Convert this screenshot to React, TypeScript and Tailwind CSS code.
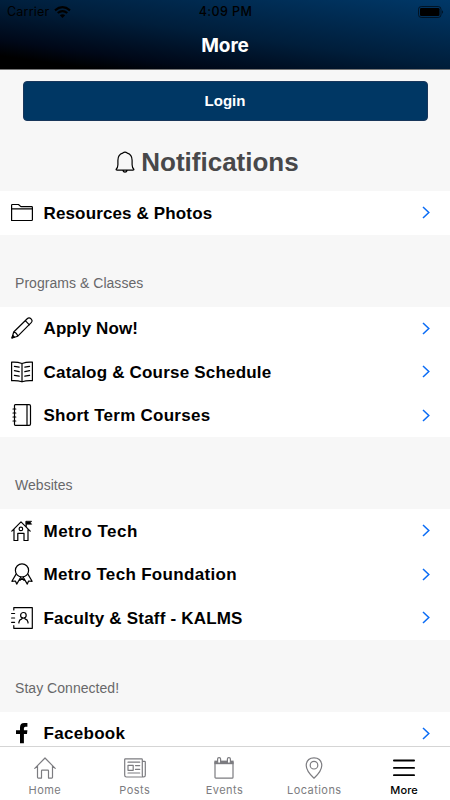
import React from 'react';

const Svg = ({ children, className = '' }: { children: React.ReactNode; className?: string }) => (
  <svg viewBox="0 0 22 22" width="22" height="22" stroke="currentColor" strokeWidth="1.2" fill="none" strokeLinecap="round" strokeLinejoin="round" className={`shrink-0 ${className}`}>{children}</svg>
);

const Icons = {
  Folder: () => <Svg><path d="M.6 18.5V3.2q0-.7.7-.7h6.2l2.4 2.1h10.7q.8 0 .8.8v12.4q0 .7-.8.7zM.6 6.9h20.8" /></Svg>,
  Pencil: () => <Svg><path d="M1 21 2.7 15 16.2 1.8q1.8-1.8 3.8 0 2 2 .2 3.9L6.8 19.2zM2.7 15q3.3.8 4.1 4.2M14.3 3.7l4.1 4.1" /><path d="m1 21 .8-2.5 1.7 1.7z" fill="currentColor" /></Svg>,
  Book: () => <Svg><path d="M.6 1.2Q6 .7 11 2.5q5-1.8 10.4-1.3v18.5q-5.4-.5-10.4 1.1-5-1.6-10.4-1.1zM11 2.5v18.3M3.4 5.3l4.8.9M3.4 9.7l4.8.9M3.4 14.3l4.8.8M18.6 5.3l-4.8.9M18.6 9.7l-4.8.9M18.6 14.3l-4.8.8" /></Svg>,
  Notebook: () => <Svg><path d="M3.5 1.5q0-.8.8-.8h13.8q1.4 0 1.4 1.4v17.8q0 1.4-1.4 1.4H4.3q-.8 0-.8-.8zM16 1v20M2 5h2.8M2 9h2.8M2 13h2.8M2 17h2.8" /></Svg>,
  School: () => <Svg><path d="M.8 11.1 10 1.9l9.2 9.2M3 9v11.5h3.8v-7.2H13v7.2h4V9M15.2 7V1.5" /><circle cx="9.9" cy="8.9" r="1.8" /><path d="M15.3 1.2h5.4l-1.3 1.6 1.3 1.5h-5.4z" fill="currentColor" strokeWidth=".6" /></Svg>,
  Ribbon: () => <Svg><circle cx="11" cy="7.4" r="6.6" /><path d="m5.1 11.1-4.2 7.2 3.5-.3 1.3 3.1 4.2-7.1M16.9 11.1l4.2 7.2-3.5-.3-1.3 3.1-4.2-7.1M9 17.4l2-2.1 2 2.1" /></Svg>,
  Contacts: () => <Svg><path d="M2.8 3V.7h18.5v20.6H2.8v-2.6M.6 6.5h3M.6 11h3M.6 15.3h3" /><circle cx="12.4" cy="8.3" r="2.8" /><path d="M7.9 16v-.8q.4-2.6 3-3.3l.4-1M17 16v-.8q-.4-2.6-3-3.3l-.4-1" /></Svg>,
  Facebook: () => <Svg><path d="M9 21.2V12H5V8.2h4V5.4Q9 1 13.2 1h3.2v3.8h-2q-1.5 0-1.5 1.5v1.9h3.5L16 12h-3.1v9.2z" fill="currentColor" stroke="none" /></Svg>,
  Bell: () => <Svg className="text-black"><path d="M3.1 19.2q-1.2 0-.9-1 1.6-1.5 1.7-4.5V9.2Q4 3.4 8.7 2.1 11 .1 13.3 2.1 18 3.4 18.1 9.2v4.5q.1 3 1.7 4.5.3 1-.9 1zM8.8 19.3q.6 1.9 2.2 1.9t2.2-1.9" /></Svg>,
};

const TabIcons = {
  Home: () => <Svg><path d="M.8 11.4 11 1l10.2 10.4M3.5 9v11.3q0 .8.8.8h3.2v-7.2q0-.7.7-.7h5.6q.7 0 .7.7v7.2h3.2q.8 0 .8-.8V9" /></Svg>,
  Posts: () => <Svg><path d="M18.3 4.4V2.5q0-.7-.7-.7H1.4q-.7 0-.7.7v15.8q0 1.7 1.7 1.7h17.2q1.7 0 1.7-1.7V5.1q0-.7-.7-.7h-2.3zm0 0v13.9q0 1.7 1.2 1.7M4 5.2h11.7M4 16h11.7M11.5 8.6h4.2M11.5 12.4h4.2M4 8.3h5.2v5H4z" /></Svg>,
  Events: () => <Svg><path d="M2 5h18v15.2q0 .9-.9.9H2.9q-.9 0-.9-.9z" /><path d="M1.4 3.6h19.2v3.6H1.4z" fill="currentColor" stroke="none" /><rect x="4.6" y=".7" width="3" height="5.6" rx="1.4" fill="#fff" /><rect x="14.4" y=".7" width="3" height="5.6" rx="1.4" fill="#fff" /></Svg>,
  Locations: () => <Svg><path d="M11 21.2Q3.2 14 3.2 8.2 3.7.8 11 .8t7.8 7.4q0 5.8-7.8 13z" /><circle cx="11" cy="8.2" r="3.8" /></Svg>,
  More: () => <Svg><path d="M.9 3.5h20.2M.9 10.9h20.2M.9 18.2h20.2" strokeWidth="1.8" /></Svg>,
};

interface Item {
  label: string;
  icon: React.FC;
  tracking?: string;
}

const Row = ({ label, icon: Icon, tracking = 'tracking-[0.2px]' }: Item) => (
  <a className="flex h-[43.5px] items-center bg-white pl-[10.5px] pr-[20px] text-black">
    <Icon />
    <span className={`ml-[11px] whitespace-nowrap pt-[1.5px] text-[17px] font-bold leading-[22px] ${tracking}`}>{label}</span>
    <svg viewBox="0 0 8 13" width="8" height="13" className="ml-auto" fill="none" stroke="#0a6cf5" strokeWidth="1.5"><path d="m1 1 5.8 5.5L1 12" /></svg>
  </a>
);

const Section = ({ title, items }: { title: string; items: Item[] }) => (
  <section>
    <h3 className="h-[72px] pl-[15px] pt-[38px] text-[14px] leading-5 tracking-[0.04px] text-[#68686a]">{title}</h3>
    {items.map((item) => <Row key={item.label} {...item} />)}
  </section>
);

const tabs = [
  { label: 'Home', icon: TabIcons.Home },
  { label: 'Posts', icon: TabIcons.Posts },
  { label: 'Events', icon: TabIcons.Events },
  { label: 'Locations', icon: TabIcons.Locations },
  { label: 'More', icon: TabIcons.More },
];

const App: React.FC = () => {
  return (
    <div className="flex h-[800px] w-[450px] flex-col overflow-hidden bg-[#f7f7f7] font-['Liberation_Sans',Arial,sans-serif]">
      <header className="h-[70px] shrink-0 border-b border-[#777] bg-[linear-gradient(188deg,#003868_0%,#001e3b_50%,#000818_78%,#000_90%)] font-['Inter',sans-serif]">
        <div className="grid h-[24px] grid-cols-3 items-center pl-[7px] pr-[6px] text-[12.5px] text-black">
          <div className="flex items-center gap-[5px]">
            <span className="tracking-[0.2px]">Carrier</span>
            <svg viewBox="0 0 17 12" width="17" height="12" fill="none" stroke="currentColor" strokeWidth="2.2"><path d="M1 4.3q7.5-6.2 15 0M3.7 7q4.8-3.8 9.6 0" /><path d="M5.8 9.2q2.7-2.1 5.4 0L8.5 12z" fill="currentColor" stroke="none" /></svg>
          </div>
          <span className="text-center font-medium tracking-[0.4px]">4:09 PM</span>
          <svg viewBox="0 0 26 12" width="26" height="12" className="mb-px justify-self-end"><rect x=".5" y=".5" width="22.5" height="11" rx="2.8" fill="none" stroke="#000" strokeOpacity=".6" /><rect x="2" y="2" width="19.5" height="8" rx="1.3" /><path d="M24.3 4q1.5 2 0 4z" /></svg>
        </div>
        <h1 className="text-center text-[19px] font-bold leading-[44px] tracking-[-0.05px] text-white">More</h1>
      </header>

      <main className="min-h-0 flex-1 overflow-hidden">
        <div className="px-[22.5px] pt-[10.5px]">
          <button className="block h-10 w-full rounded-[4px] border border-[#18365b] bg-[#003764] pt-px text-[15px] font-bold text-white">Login</button>
        </div>
        <div className="flex h-[70.5px] items-center justify-center pr-[37px] pt-[12px] text-[#48484a]">
          <Icons.Bell />
          <h2 className="ml-[5px] text-[26px] font-bold leading-8">Notifications</h2>
        </div>
        <Row label="Resources & Photos" icon={Icons.Folder} tracking="tracking-[0.14px]" />
        <Section title="Programs & Classes" items={[
          { label: 'Apply Now!', icon: Icons.Pencil, tracking: 'tracking-[0.1px]' },
          { label: 'Catalog & Course Schedule', icon: Icons.Book },
          { label: 'Short Term Courses', icon: Icons.Notebook, tracking: 'tracking-[0.26px]' },
        ]} />
        <Section title="Websites" items={[
          { label: 'Metro Tech', icon: Icons.School, tracking: 'tracking-[0.5px]' },
          { label: 'Metro Tech Foundation', icon: Icons.Ribbon, tracking: 'tracking-[0.32px]' },
          { label: 'Faculty & Staff - KALMS', icon: Icons.Contacts },
        ]} />
        <Section title="Stay Connected!" items={[{ label: 'Facebook', icon: Icons.Facebook, tracking: 'tracking-[0.3px]' }]} />
      </main>

      <nav className="grid h-[54px] shrink-0 grid-cols-5 border-t border-[#d5d5d5] bg-white pr-px font-['Inter',sans-serif]">
        {tabs.map(({ label, icon: Icon }) => (
          <a key={label} className={`flex flex-col items-center pt-[10px] text-[11px] leading-[14px] ${label === 'More' ? 'font-medium tracking-[0.1px] text-black' : 'tracking-[0.45px] text-[#7c7c80]'}`}>
            <Icon />
            <span className="mt-[4px]">{label}</span>
          </a>
        ))}
      </nav>
    </div>
  );
};

export default App;
